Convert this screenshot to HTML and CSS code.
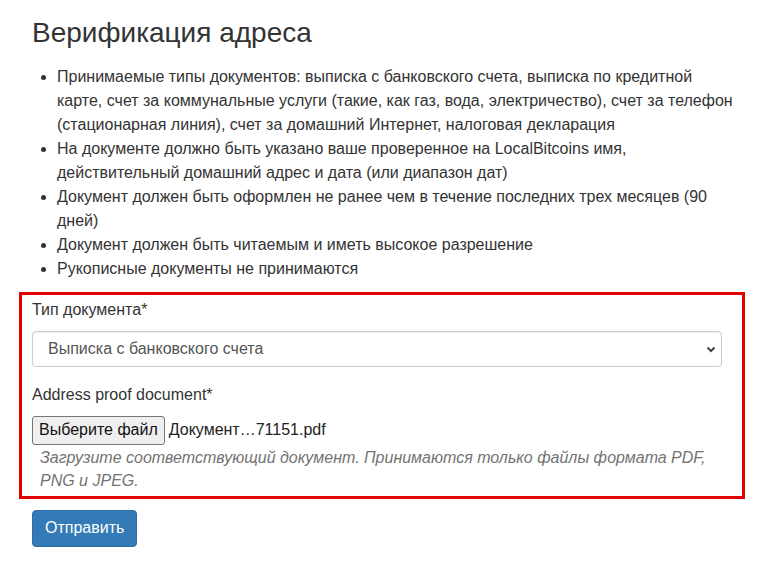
FILE: index.html
```html
<!DOCTYPE html>
<html lang="ru">
<head>
  <meta charset="UTF-8" />
  <meta name="viewport" content="width=device-width, initial-scale=1.0"/>
  <title>Верификация адреса</title>
  <link rel="stylesheet" href="styles.css">
</head>
<body>

<div class="page">
  <h1>Верификация адреса</h1>

  <ul class="rules">
    <li>Принимаемые типы документов: выписка с банковского счета, выписка по кредитной карте, счет за коммунальные услуги (такие, как газ, вода, электричество), счет за телефон (стационарная линия), счет за домашний Интернет, налоговая декларация</li>
    <li>На документе должно быть указано ваше проверенное на LocalBitcoins имя, действительный домашний адрес и дата (или диапазон дат)</li>
    <li>Документ должен быть оформлен не ранее чем в течение последних трех месяцев (90 дней)</li>
    <li>Документ должен быть читаемым и иметь высокое разрешение</li>
    <li>Рукописные документы не принимаются</li>
  </ul>

  <div class="highlight">
    <label class="field-label" for="docType">Тип документа*</label>
    <div class="select-wrap">
      <select id="docType" class="form-control">
        <option>Выписка с банковского счета</option>
        <option>Выписка по кредитной карте</option>
        <option>Счет за коммунальные услуги</option>
        <option>Счет за телефон</option>
        <option>Счет за домашний Интернет</option>
        <option>Налоговая декларация</option>
      </select>
      <svg class="chevron" width="10" height="7" viewBox="0 0 10 7">
        <path d="M1.5 1.5 L5 5 L8.5 1.5" fill="none" stroke="#444" stroke-width="2"/>
      </svg>
    </div>

    <label class="field-label second">Address proof document*</label>
    <div class="file-row">
      <button type="button" class="file-btn">Выберите файл</button>
      <span class="file-name">Документ…71151.pdf</span>
    </div>
    <p class="help">Загрузите соответствующий документ. Принимаются только файлы формата PDF, PNG и JPEG.</p>
  </div>

  <button type="submit" class="btn-primary">Отправить</button>
</div>

</body>
</html>
```

FILE: styles.css
```css
body {
  margin: 0;
  font-family: "Liberation Sans", Arial, Helvetica, sans-serif;
  font-size: 16px;
  color: #333;
  background: #fff;
}
.page {
  padding: 18px 32px 20px;
}
h1 {
  margin: 0;
  font-size: 28px;
  font-weight: 400;
  line-height: 1.1;
  color: #333;
}
.rules {
  margin: 16px 10px 0 0;
  padding-left: 25px;
  line-height: 24px;
}
.highlight {
  margin: 11px 1px 0 -13px;
  border: 3px solid #e00000;
  padding: 4px 20px 4px 10px;
}
.field-label {
  display: block;
  line-height: 22px;
  margin-bottom: 10px;
}
.field-label.second {
  margin-top: 17px;
}
.select-wrap {
  position: relative;
}
.form-control {
  display: block;
  width: 100%;
  height: 36px;
  padding: 6px 12px 6px 15px;
  font-family: inherit;
  font-size: 16px;
  color: #555;
  background: #fff;
  border: 1px solid #ccc;
  border-radius: 4px;
  box-shadow: inset 0 1px 1px rgba(0,0,0,0.075);
  -webkit-appearance: none;
  appearance: none;
}
.chevron {
  position: absolute;
  right: 6px;
  top: 15px;
  pointer-events: none;
}
.file-row {
  display: flex;
  align-items: center;
  height: 29px;
}
.file-btn {
  height: 29px;
  padding: 1px 6px;
  font-family: inherit;
  font-size: 16px;
  color: #111;
  background: #efefef;
  border: 1px solid #767676;
  border-radius: 3px;
}
.file-name {
  margin-left: 4px;
  color: #222;
}
.help {
  margin: 1px 0 0 8px;
  font-style: italic;
  line-height: 23px;
  color: #737373;
}
.btn-primary {
  margin-top: 11px;
  padding: 6px 12px;
  font-family: inherit;
  font-size: 16px;
  line-height: 1.42857;
  color: #fff;
  background-color: #337ab7;
  border: 1px solid #2e6da4;
  border-radius: 4px;
  cursor: pointer;
}
```
